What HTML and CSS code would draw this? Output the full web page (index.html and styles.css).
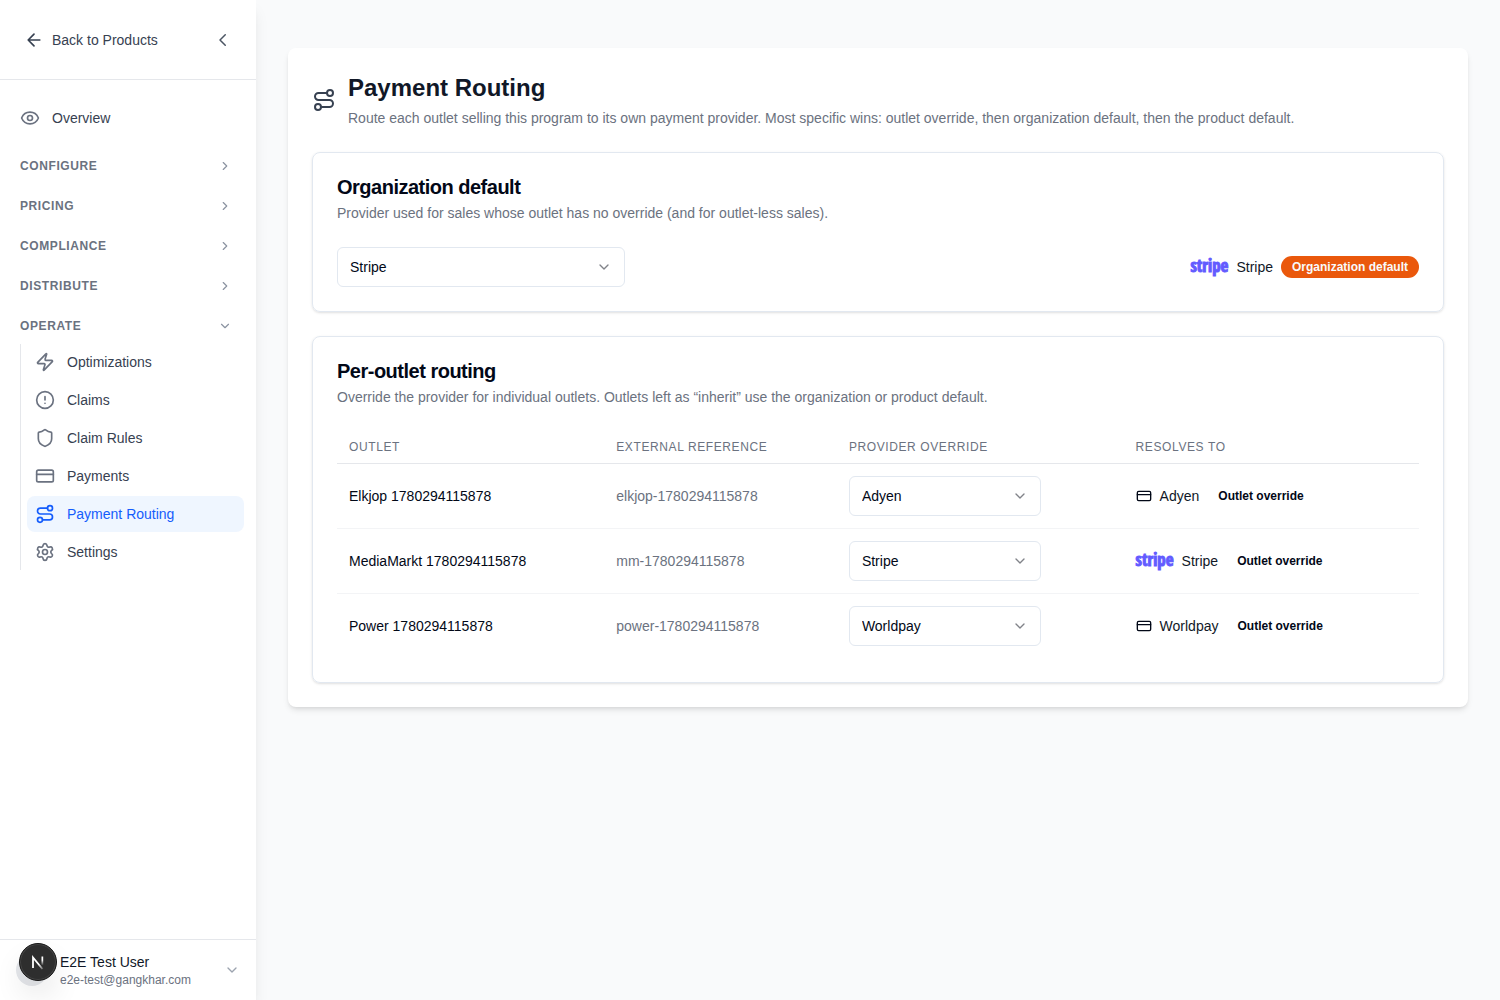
FILE: index.html
```html
<!DOCTYPE html>
<html lang="en">
<head>
<meta charset="utf-8">
<meta name="viewport" content="width=device-width, initial-scale=1">
<title>Payment Routing</title>
<link rel="stylesheet" href="styles.css">
</head>
<body>
<svg class="sprite" aria-hidden="true">
  <symbol id="route" viewBox="0 0 24 24"><circle cx="6" cy="19" r="3"/><path d="M9 19h8.5a3.5 3.5 0 0 0 0-7h-11a3.5 3.5 0 0 1 0-7H15"/><circle cx="18" cy="5" r="3"/></symbol>
  <symbol id="card" viewBox="0 0 24 24"><rect width="20" height="14" x="2" y="5" rx="2"/><path d="M2 10h20"/></symbol>
  <symbol id="down" viewBox="0 0 24 24"><path d="m6 9 6 6 6-6"/></symbol>
  <symbol id="right" viewBox="0 0 24 24"><path d="m9 18 6-6-6-6"/></symbol>
</svg>
<div class="app">
  <aside class="sidebar">
    <div class="sidebar-head">
      <a class="back" href="#products"><svg class="icon" viewBox="0 0 24 24"><path d="m12 19-7-7 7-7M19 12H5"/></svg>Back to Products</a>
      <button class="collapse" type="button" aria-label="Collapse sidebar"><svg class="icon" viewBox="0 0 24 24"><path d="m15 19-7-7 7-7"/></svg></button>
    </div>
    <nav class="nav">
      <a class="nav-item overview" href="#overview"><svg class="icon" viewBox="0 0 24 24"><path d="M2.06 12.35a1 1 0 0 1 0-.7 10.75 10.75 0 0 1 19.88 0 1 1 0 0 1 0 .7 10.75 10.75 0 0 1-19.88 0"/><circle cx="12" cy="12" r="3"/></svg>Overview</a>
      <button class="group" type="button">CONFIGURE<svg class="icon"><use href="#right"/></svg></button>
      <button class="group" type="button">PRICING<svg class="icon"><use href="#right"/></svg></button>
      <button class="group" type="button">COMPLIANCE<svg class="icon"><use href="#right"/></svg></button>
      <button class="group" type="button">DISTRIBUTE<svg class="icon"><use href="#right"/></svg></button>
      <button class="group" type="button" aria-expanded="true">OPERATE<svg class="icon"><use href="#down"/></svg></button>
      <div class="subnav">
        <a class="nav-item" href="#optimizations"><svg class="icon" viewBox="0 0 24 24"><path d="M4 14a1 1 0 0 1-.78-1.63l9.9-10.2a.5.5 0 0 1 .86.46l-1.92 6.02A1 1 0 0 0 13 10h7a1 1 0 0 1 .78 1.63l-9.9 10.2a.5.5 0 0 1-.86-.46l1.92-6.02A1 1 0 0 0 11 14z"/></svg>Optimizations</a>
        <a class="nav-item" href="#claims"><svg class="icon" viewBox="0 0 24 24"><circle cx="12" cy="12" r="10"/><path d="M12 8v4M12 16h.01"/></svg>Claims</a>
        <a class="nav-item" href="#claim-rules"><svg class="icon" viewBox="0 0 24 24"><path d="M20 13c0 5-3.5 7.5-7.66 8.95a1 1 0 0 1-.67-.01C7.5 20.5 4 18 4 13V6a1 1 0 0 1 1-1c2 0 4.5-1.2 6.24-2.72a1.17 1.17 0 0 1 1.52 0C14.51 3.81 17 5 19 5a1 1 0 0 1 1 1z"/></svg>Claim Rules</a>
        <a class="nav-item" href="#payments"><svg class="icon"><use href="#card"/></svg>Payments</a>
        <a class="nav-item active" href="#payment-routing" aria-current="page"><svg class="icon"><use href="#route"/></svg>Payment Routing</a>
        <a class="nav-item" href="#settings"><svg class="icon" viewBox="0 0 24 24"><path d="M9.671 4.136a2.34 2.34 0 0 1 4.659 0 2.34 2.34 0 0 0 3.319 1.915 2.34 2.34 0 0 1 2.33 4.033 2.34 2.34 0 0 0 0 3.831 2.34 2.34 0 0 1-2.33 4.033 2.34 2.34 0 0 0-3.319 1.915 2.34 2.34 0 0 1-4.659 0 2.34 2.34 0 0 0-3.32-1.915 2.34 2.34 0 0 1-2.33-4.033 2.34 2.34 0 0 0 0-3.831A2.34 2.34 0 0 1 6.35 6.051a2.34 2.34 0 0 0 3.319-1.915"/><circle cx="12" cy="12" r="3"/></svg>Settings</a>
      </div>
    </nav>
    <button class="user" type="button">
      <span class="avatar"></span>
      <span class="user-text"><span class="user-name">E2E Test User</span><span class="user-mail">e2e-test@gangkhar.com</span></span>
      <svg class="icon small"><use href="#down"/></svg>
    </button>
  </aside>
  <main class="main">
    <div class="panel">
      <header class="page-head">
        <svg class="icon large"><use href="#route"/></svg>
        <div>
          <h1>Payment Routing</h1>
          <p>Route each outlet selling this program to its own payment provider. Most specific wins: outlet override, then organization default, then the product default.</p>
        </div>
      </header>
      <section class="card">
        <h2 id="org-title">Organization default</h2>
        <p>Provider used for sales whose outlet has no override (and for outlet-less sales).</p>
        <div class="default-row">
          <div class="select wide"><select aria-labelledby="org-title"><option>Stripe</option><option>Adyen</option><option>Worldpay</option></select><svg class="icon small"><use href="#down"/></svg></div>
          <div class="resolved"><span class="stripe">stripe</span><span>Stripe</span><span class="badge solid">Organization default</span></div>
        </div>
      </section>
      <section class="card">
        <h2>Per-outlet routing</h2>
        <p>Override the provider for individual outlets. Outlets left as “inherit” use the organization or product default.</p>
        <table>
          <thead><tr><th class="c-outlet">OUTLET</th><th class="c-ref">EXTERNAL REFERENCE</th><th class="c-provider" id="provider">PROVIDER OVERRIDE</th><th>RESOLVES TO</th></tr></thead>
          <tbody>
            <tr>
              <td id="elkjop">Elkjop 1780294115878</td><td class="ref">elkjop-1780294115878</td>
              <td><div class="select"><select aria-labelledby="provider elkjop"><option>Adyen</option><option>Stripe</option><option>Worldpay</option></select><svg class="icon small"><use href="#down"/></svg></div></td>
              <td><div class="resolved"><svg class="icon small"><use href="#card"/></svg><span>Adyen</span><span class="badge">Outlet override</span></div></td>
            </tr>
            <tr>
              <td id="mediamarkt">MediaMarkt 1780294115878</td><td class="ref">mm-1780294115878</td>
              <td><div class="select"><select aria-labelledby="provider mediamarkt"><option>Stripe</option><option>Adyen</option><option>Worldpay</option></select><svg class="icon small"><use href="#down"/></svg></div></td>
              <td><div class="resolved"><span class="stripe">stripe</span><span>Stripe</span><span class="badge">Outlet override</span></div></td>
            </tr>
            <tr>
              <td id="power">Power 1780294115878</td><td class="ref">power-1780294115878</td>
              <td><div class="select"><select aria-labelledby="provider power"><option>Worldpay</option><option>Adyen</option><option>Stripe</option></select><svg class="icon small"><use href="#down"/></svg></div></td>
              <td><div class="resolved"><svg class="icon small"><use href="#card"/></svg><span>Worldpay</span><span class="badge">Outlet override</span></div></td>
            </tr>
          </tbody>
        </table>
      </section>
    </div>
  </main>
</div>
<button class="dev-badge" type="button" aria-label="Open developer tools">
  <svg viewBox="0 0 36 36"><defs><linearGradient id="fade" x1="0" y1="0" x2="0" y2="1"><stop offset="0.4" stop-color="#fff"/><stop offset="1" stop-color="#fff" stop-opacity="0"/></linearGradient><linearGradient id="fade-end" x1="0" y1="0" x2="1" y2="1"><stop offset="0.6" stop-color="#fff"/><stop offset="1" stop-color="#fff" stop-opacity="0.3"/></linearGradient></defs><path d="M13 24V13.500l9.500 11.500" fill="none" stroke="url(#fade-end)" stroke-width="1.8"/><rect x="21.500" y="12.500" width="1.700" height="9" fill="url(#fade)"/></svg>
</button>
</body>
</html>
```
FILE: styles.css
```css
* { box-sizing: border-box; }
body {
  margin: 0;
  background: #f9fafb;
  color: #020817;
  font: 14px/20px "Liberation Sans", Arial, sans-serif;
}
h1, h2, p { margin: 0; }
a { color: inherit; text-decoration: none; }
button {
  padding: 0;
  border: 0;
  background: none;
  color: inherit;
  font: inherit;
  text-align: left;
  cursor: pointer;
}
.sprite { position: absolute; width: 0; height: 0; }
.icon {
  display: block;
  flex: none;
  width: 20px;
  height: 20px;
  fill: none;
  stroke: currentColor;
  stroke-width: 2;
  stroke-linecap: round;
  stroke-linejoin: round;
}
.icon.small { width: 16px; height: 16px; }
.icon.large { width: 24px; height: 24px; color: #374151; }

.app { display: flex; min-height: 100vh; }

/* Sidebar */
.sidebar {
  position: sticky;
  top: 0;
  display: flex;
  flex: none;
  flex-direction: column;
  width: 256px;
  height: 100vh;
  background: #fff;
  box-shadow: 0 10px 15px -3px rgb(0 0 0 / 10%), 0 4px 6px -4px rgb(0 0 0 / 10%);
}
.sidebar-head {
  display: flex;
  align-items: center;
  justify-content: space-between;
  height: 80px;
  padding: 0 24px;
  border-bottom: 1px solid #e5e7eb;
  color: #374151;
}
.back { display: flex; align-items: center; gap: 8px; }
.collapse { color: #4b5563; }
.collapse .icon { width: 18px; height: 18px; }
.nav { flex: 1; padding: 20px 12px 0 20px; }
.nav-item {
  display: flex;
  align-items: center;
  gap: 12px;
  height: 36px;
  padding: 0 8px;
  border-radius: 8px;
  color: #374151;
}
.nav-item .icon { color: #6b7280; }
.overview { margin-bottom: 10px; padding: 0; }
.group {
  display: flex;
  align-items: center;
  justify-content: space-between;
  width: 100%;
  height: 40px;
  padding-right: 12px;
  color: #6b7280;
  font-size: 12px;
  font-weight: 700;
  letter-spacing: 0.05em;
}
.group .icon { width: 14px; height: 14px; color: #8b93a1; }
.subnav {
  display: grid;
  gap: 2px;
  margin-top: -2px;
  padding-left: 6px;
  border-left: 1px solid #e5e7eb;
}
.nav-item.active { background: #eff6ff; color: #155dfc; }
.nav-item.active .icon { color: #155dfc; }
.user {
  display: flex;
  align-items: center;
  gap: 12px;
  padding: 12px 16px;
  border-top: 1px solid #e5e7eb;
}
.avatar { width: 32px; height: 32px; border-radius: 50%; background: #e5e7eb; }
.user-text { display: grid; flex: 1; }
.user-name { color: #111827; }
.user-mail { color: #6b7280; font-size: 12px; line-height: 16px; }
.user .icon { color: #9ca3af; }

/* Floating developer button, above the page */
.dev-badge {
  position: fixed;
  bottom: 19px;
  left: 19px;
  width: 38px;
  height: 38px;
  border: 1px solid #171717;
  border-radius: 50%;
  background: #2e2e2e;
  box-shadow: inset 0 0 0 1px #454545, 0 16px 32px -8px rgb(0 0 0 / 24%);
}
.dev-badge svg { display: block; width: 36px; height: 36px; }

/* Content */
.main { flex: 1; min-width: 0; padding: 48px 32px; }
.panel {
  display: grid;
  gap: 24px;
  padding: 24px;
  border-radius: 8px;
  background: #fff;
  box-shadow: 0 4px 6px -1px rgb(0 0 0 / 10%), 0 2px 4px -2px rgb(0 0 0 / 10%);
}
.page-head { display: flex; align-items: center; gap: 12px; }
.page-head h1 { margin-bottom: 4px; color: #111827; font-size: 24px; line-height: 32px; }
.page-head p, .card p { color: #6b7280; }
.card {
  padding: 24px;
  border: 1px solid #e2e8f0;
  border-radius: 8px;
  box-shadow: 0 1px 3px rgb(0 0 0 / 10%), 0 1px 2px -1px rgb(0 0 0 / 10%);
}
.card h2 { margin-bottom: 6px; font-size: 20px; line-height: 20px; letter-spacing: -0.025em; }
.card p { margin-bottom: 24px; }
.default-row { display: flex; align-items: center; justify-content: space-between; }
.select { display: grid; align-items: center; width: 192px; }
.select.wide { width: 288px; }
.select > * { grid-area: 1 / 1; }
.select select {
  width: 100%;
  height: 40px;
  padding: 0 12px;
  border: 1px solid #e2e8f0;
  border-radius: 6px;
  appearance: none;
  background: #fff;
  color: inherit;
  font: inherit;
}
.select .icon { justify-self: end; margin-right: 13px; color: #818389; pointer-events: none; }
.resolved { display: flex; align-items: center; gap: 8px; color: #111827; }
.resolved .icon { color: #020817; }
.stripe {
  padding-bottom: 2px;
  color: #635bff;
  font: 700 17px/18px "Liberation Sans Narrow", "Open Sans Condensed", "Liberation Sans", sans-serif;
  -webkit-text-stroke: 1px #635bff;
}
.badge {
  padding: 2px 10px;
  border: 1px solid transparent;
  border-radius: 11px;
  color: #020817;
  font-size: 12px;
  font-weight: 700;
  line-height: 16px;
}
.badge.solid { background: #ea580c; color: #f8fafc; }
table { width: 100%; border-collapse: separate; border-spacing: 0; table-layout: fixed; }
th {
  padding: 8px 12px;
  border-bottom: 1px solid #e5e7eb;
  color: #6b7280;
  font-size: 12px;
  font-weight: 400;
  line-height: 16px;
  letter-spacing: 0.05em;
  text-align: left;
}
td { padding: 12px; border-bottom: 1px solid #f3f4f6; }
tbody tr:last-child td { border-bottom: 0; }
.c-outlet { width: 24.7%; }
.c-ref { width: 21.5%; }
.c-provider { width: 26.5%; }
.ref { color: #6b7280; }
```
